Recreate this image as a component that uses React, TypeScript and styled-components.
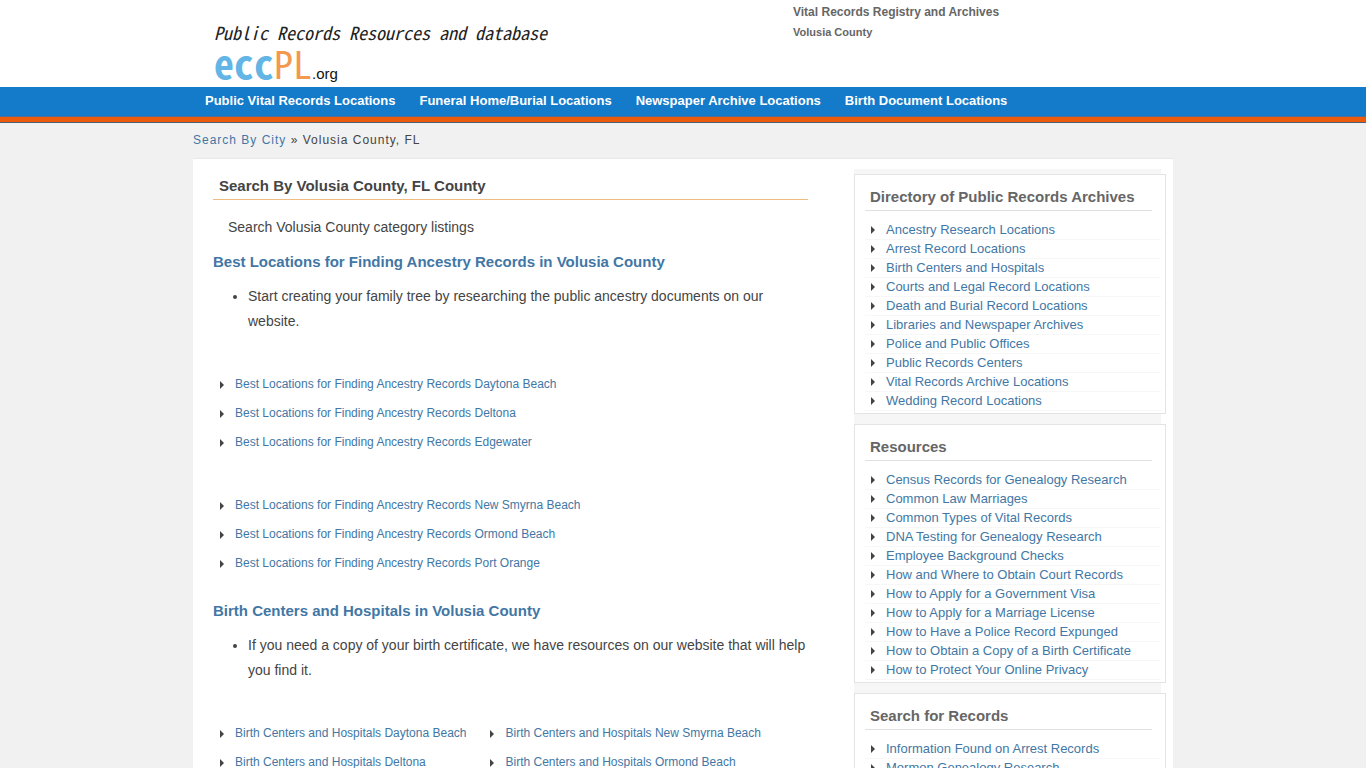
import React from "react";
import styled, { createGlobalStyle } from "styled-components";

const GlobalStyle = createGlobalStyle`
  *, *::before { box-sizing: border-box; }
  html { scrollbar-width: none; }
  body {
    margin: 0;
    background: #f1f1f1;
    color: #444;
    font-family: "Liberation Sans", Arial, sans-serif;
    font-size: 14px;
    line-height: 25px;
  }
  h1, h2, h3, p, ul { margin: 0; padding: 0; }
  a { color: #4277a5; text-decoration: none; }
  a:hover { text-decoration: underline; }
`;

const Container = styled.div`
  max-width: 980px;
  margin: 0 auto;
`;

const Header = styled.header`
  background: #fff;
`;

const HeaderRow = styled(Container)`
  display: flex;
  min-height: 87px;
`;

const LogoArea = styled.div`
  width: 600px;
  padding: 21px 0 0 21px;
`;

const Logo = styled.a`
  display: block;
  color: #222;
  &:hover { text-decoration: none; }
`;

const Tagline = styled.span`
  display: block;
  font-family: "Noto Sans Mono CJK JP", "Liberation Mono", monospace;
  font-size: 18px;
  font-style: italic;
  line-height: 22px;
  white-space: nowrap;
`;

const Wordmark = styled.span`
  display: flex;
  align-items: baseline;
  height: 38px;
  line-height: 38px;
  font-family: "Noto Sans Mono CJK JP", "Liberation Sans", sans-serif;
`;

const Ecc = styled.span`
  color: #62b5e5;
  font-size: 40px;
  font-weight: bold;
`;

const Pl = styled.span`
  color: #f2994f;
  font-size: 38px;
`;

const Org = styled.span`
  color: #111;
  font-family: "Liberation Sans", sans-serif;
  font-size: 15px;
`;

const SiteInfo = styled.div`
  color: #666;
  font-weight: bold;
`;

const SiteName = styled.p`
  font-size: 12px;
  line-height: 24px;
`;

const SiteCounty = styled.p`
  font-size: 11px;
  line-height: 16px;
`;

const NavBar = styled.nav`
  background: #137bca;
  border-bottom: 1px solid #4d6f95;
`;

const NavList = styled.ul`
  display: flex;
  flex-wrap: wrap;
  gap: 24px;
  max-width: 980px;
  min-height: 29px;
  margin: 0 auto;
  padding: 0 12px;
  list-style: none;
`;

const NavLink = styled.a`
  color: #fff;
  font-size: 13px;
  font-weight: bold;
  line-height: 27px;
`;

const Stripe = styled.div`
  height: 6px;
  background: #ec5a0c;
  border-bottom: 1px solid #4d5f75;
`;

const Breadcrumb = styled(Container)`
  padding: 5px 0;
  font-size: 12px;
  letter-spacing: 1px;
`;

const Page = styled(Container)`
  display: flex;
  justify-content: space-between;
  align-items: flex-start;
  padding: 0 12px 40px 20px;
  background: #fff;
  border-top: 1px solid #e8e8e8;
`;

const Main = styled.main`
  flex: 0 1 595px;
  min-width: 0;
  padding-top: 15px;
`;

const Title = styled.h1`
  padding: 0 6px 2px;
  border-bottom: 1px solid #eebb80;
  font-size: 15px;
  line-height: 23px;
`;

const Intro = styled.p`
  padding: 15px 15px 0;
`;

const Section = styled.section`
  padding-bottom: 11px;
`;

const SectionTitle = styled.h2`
  padding-top: 10px;
  font-size: 15px;
  line-height: 24px;
`;

const Bullets = styled.ul`
  padding: 10px 0 2px 35px;
`;

const Columns = styled.div`
  display: flex;
  flex-wrap: wrap;
`;

const LinkList = styled.ul`
  padding: 34px 17px 0 7px;
  list-style: none;
  font-size: 12px;
  line-height: 29px;
`;

const ArrowItem = styled.li`
  display: flex;
  align-items: center;
  gap: 11px;
  &::before {
    content: "";
    flex: none;
    border: solid transparent;
    border-width: 4px 0 4px 4px;
    border-left-color: #444;
  }
`;

const Sidebar = styled.aside`
  display: flex;
  flex-direction: column;
  gap: 10px;
  flex: 0 0 307px;
  margin-top: 10px;
  padding: 5px 0;
  background: #f6f6f6;
`;

const Box = styled.section`
  margin-right: -5px;
  padding: 10px 4px 2px 10px;
  background: #fff;
  border: 1px solid #e4e4e4;
`;

const BoxTitle = styled.h3`
  margin: 0 9px 10px 0;
  padding: 0 0 2px 5px;
  border-bottom: 1px solid #e0e0e0;
  color: #666;
  font-size: 15px;
  line-height: 23px;
`;

const BoxList = styled.ul`
  list-style: none;
  font-size: 13px;
  line-height: 18px;
`;

const BoxItem = styled(ArrowItem)`
  padding-left: 6px;
  border-bottom: 1px solid #f7f7f7;
`;

const navItems = [
  "Public Vital Records Locations",
  "Funeral Home/Burial Locations",
  "Newspaper Archive Locations",
  "Birth Document Locations",
];

const cityColumns = [
  ["Daytona Beach", "Deltona", "Edgewater"],
  ["New Smyrna Beach", "Ormond Beach", "Port Orange"],
];

const categories = [
  {
    name: "Best Locations for Finding Ancestry Records",
    text: "Start creating your family tree by researching the public ancestry documents on our website.",
  },
  {
    name: "Birth Centers and Hospitals",
    text: "If you need a copy of your birth certificate, we have resources on our website that will help you find it.",
  },
];

const boxes = [
  {
    title: "Directory of Public Records Archives",
    links: [
      "Ancestry Research Locations",
      "Arrest Record Locations",
      "Birth Centers and Hospitals",
      "Courts and Legal Record Locations",
      "Death and Burial Record Locations",
      "Libraries and Newspaper Archives",
      "Police and Public Offices",
      "Public Records Centers",
      "Vital Records Archive Locations",
      "Wedding Record Locations",
    ],
  },
  {
    title: "Resources",
    links: [
      "Census Records for Genealogy Research",
      "Common Law Marriages",
      "Common Types of Vital Records",
      "DNA Testing for Genealogy Research",
      "Employee Background Checks",
      "How and Where to Obtain Court Records",
      "How to Apply for a Government Visa",
      "How to Apply for a Marriage License",
      "How to Have a Police Record Expunged",
      "How to Obtain a Copy of a Birth Certificate",
      "How to Protect Your Online Privacy",
    ],
  },
  {
    title: "Search for Records",
    links: ["Information Found on Arrest Records", "Mormon Genealogy Research"],
  },
];

export default function App() {
  return (
    <>
      <GlobalStyle />
      <Header>
        <HeaderRow>
          <LogoArea>
            <Logo href="#">
              <Tagline>Public Records Resources and database</Tagline>
              <Wordmark>
                <Ecc>ecc</Ecc>
                <Pl>PL</Pl>
                <Org>.org</Org>
              </Wordmark>
            </Logo>
          </LogoArea>
          <SiteInfo>
            <SiteName>Vital Records Registry and Archives</SiteName>
            <SiteCounty>Volusia County</SiteCounty>
          </SiteInfo>
        </HeaderRow>
      </Header>
      <NavBar>
        <NavList>
          {navItems.map((item) => (
            <li key={item}>
              <NavLink href="#">{item}</NavLink>
            </li>
          ))}
        </NavList>
      </NavBar>
      <Stripe />
      <Breadcrumb>
        <a href="#">Search By City</a> » Volusia County, FL
      </Breadcrumb>
      <Page>
        <Main>
          <Title>Search By Volusia County, FL County</Title>
          <Intro>Search Volusia County category listings</Intro>
          {categories.map((category) => (
            <Section key={category.name}>
              <SectionTitle>
                <a href="#">{category.name} in Volusia County</a>
              </SectionTitle>
              <Bullets>
                <li>{category.text}</li>
              </Bullets>
              <Columns>
                {cityColumns.map((cities) => (
                  <LinkList key={cities[0]}>
                    {cities.map((city) => (
                      <ArrowItem key={city}>
                        <a href="#">{category.name} {city}</a>
                      </ArrowItem>
                    ))}
                  </LinkList>
                ))}
              </Columns>
            </Section>
          ))}
        </Main>
        <Sidebar>
          {boxes.map((box) => (
            <Box key={box.title}>
              <BoxTitle>{box.title}</BoxTitle>
              <BoxList>
                {box.links.map((link) => (
                  <BoxItem key={link}>
                    <a href="#">{link}</a>
                  </BoxItem>
                ))}
              </BoxList>
            </Box>
          ))}
        </Sidebar>
      </Page>
    </>
  );
}
